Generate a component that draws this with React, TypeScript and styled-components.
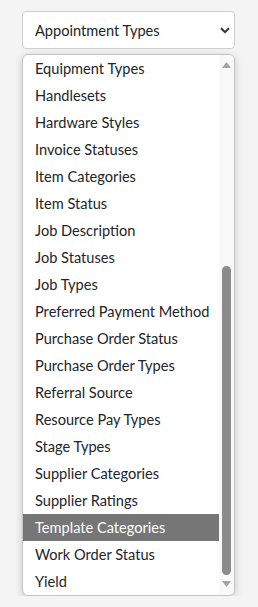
import styled, {createGlobalStyle} from 'styled-components';

const options = [
  'Equipment Types',
  'Handlesets',
  'Hardware Styles',
  'Invoice Statuses',
  'Item Categories',
  'Item Status',
  'Job Description',
  'Job Statuses',
  'Job Types',
  'Preferred Payment Method',
  'Purchase Order Status',
  'Purchase Order Types',
  'Referral Source',
  'Resource Pay Types',
  'Stage Types',
  'Supplier Categories',
  'Supplier Ratings',
  'Template Categories',
  'Work Order Status',
  'Yield',
];

const selected = 'Template Categories';

const GlobalStyle = createGlobalStyle`
  body {
    margin: 0;
    background: #f4f4f4;
    font-family: "Lato", "Noto Sans", sans-serif;
  }
`;

export default function App() {
  return (
    <>
      <GlobalStyle />
      <Page>
        <Select>
          <span>Appointment Types</span>
          <Chevron width="10" height="7" viewBox="0 0 10 7">
            <path d="M1 1.2 L5 5.2 L9 1.2" fill="none" stroke="#333" strokeWidth="2" />
          </Chevron>
        </Select>
        <Dropdown>
          <List>
            {options.map(o => (
              <Option key={o} $active={o === selected}>{o}</Option>
            ))}
          </List>
          <Scrollbar>
            <Arrow viewBox="0 0 9 6" width="9" height="6">
              <path d="M0 6 L4.5 0 L9 6 Z" fill="#a3a3a3" />
            </Arrow>
            <Track>
              <Thumb />
            </Track>
            <Arrow viewBox="0 0 9 6" width="9" height="6">
              <path d="M0 0 L4.5 6 L9 0 Z" fill="#a3a3a3" />
            </Arrow>
          </Scrollbar>
        </Dropdown>
      </Page>
    </>
  );
}

const Page = styled.div`
  padding: 11px 0 0 22px;
  width: 213px;
  display: flex;
  flex-direction: column;
  gap: 5px;
`;

const Select = styled.div`
  box-sizing: border-box;
  height: 38px;
  border: 1px solid #cfcfcf;
  border-radius: 4px;
  background: #fff;
  display: flex;
  align-items: center;
  justify-content: space-between;
  padding: 0 4px 0 12px;
  font-size: 14.6px;
  color: #212529;
`;

const Chevron = styled.svg`
  display: block;
`;

const Dropdown = styled.div`
  height: 540px;
  border: 1px solid #c4c4c4;
  border-radius: 6px;
  background: #fff;
  box-shadow: 0 2px 8px rgba(0, 0, 0, 0.18);
  display: flex;
  overflow: hidden;
`;

const List = styled.div`
  flex: 1;
  min-width: 0;
  display: flex;
  flex-direction: column;
`;

const Option = styled.div<{$active?: boolean}>`
  height: 27px;
  line-height: 27px;
  padding-left: 12px;
  font-size: 14.6px;
  white-space: nowrap;
  color: ${p => (p.$active ? '#fff' : '#212529')};
  background: ${p => (p.$active ? '#767676' : 'transparent')};
`;

const Scrollbar = styled.div`
  flex: none;
  width: 15px;
  background: #f9f9f9;
  display: flex;
  flex-direction: column;
  align-items: center;
  padding: 7px 0 8px;
  gap: 4px;
`;

const Arrow = styled.svg`
  display: block;
  flex: none;
`;

const Track = styled.div`
  flex: 1;
  width: 9px;
  display: flex;
  flex-direction: column;
  justify-content: flex-end;
  padding-bottom: 2px;
`;

const Thumb = styled.div`
  height: 309px;
  border-radius: 5px;
  background: #8b8b8b;
`;
